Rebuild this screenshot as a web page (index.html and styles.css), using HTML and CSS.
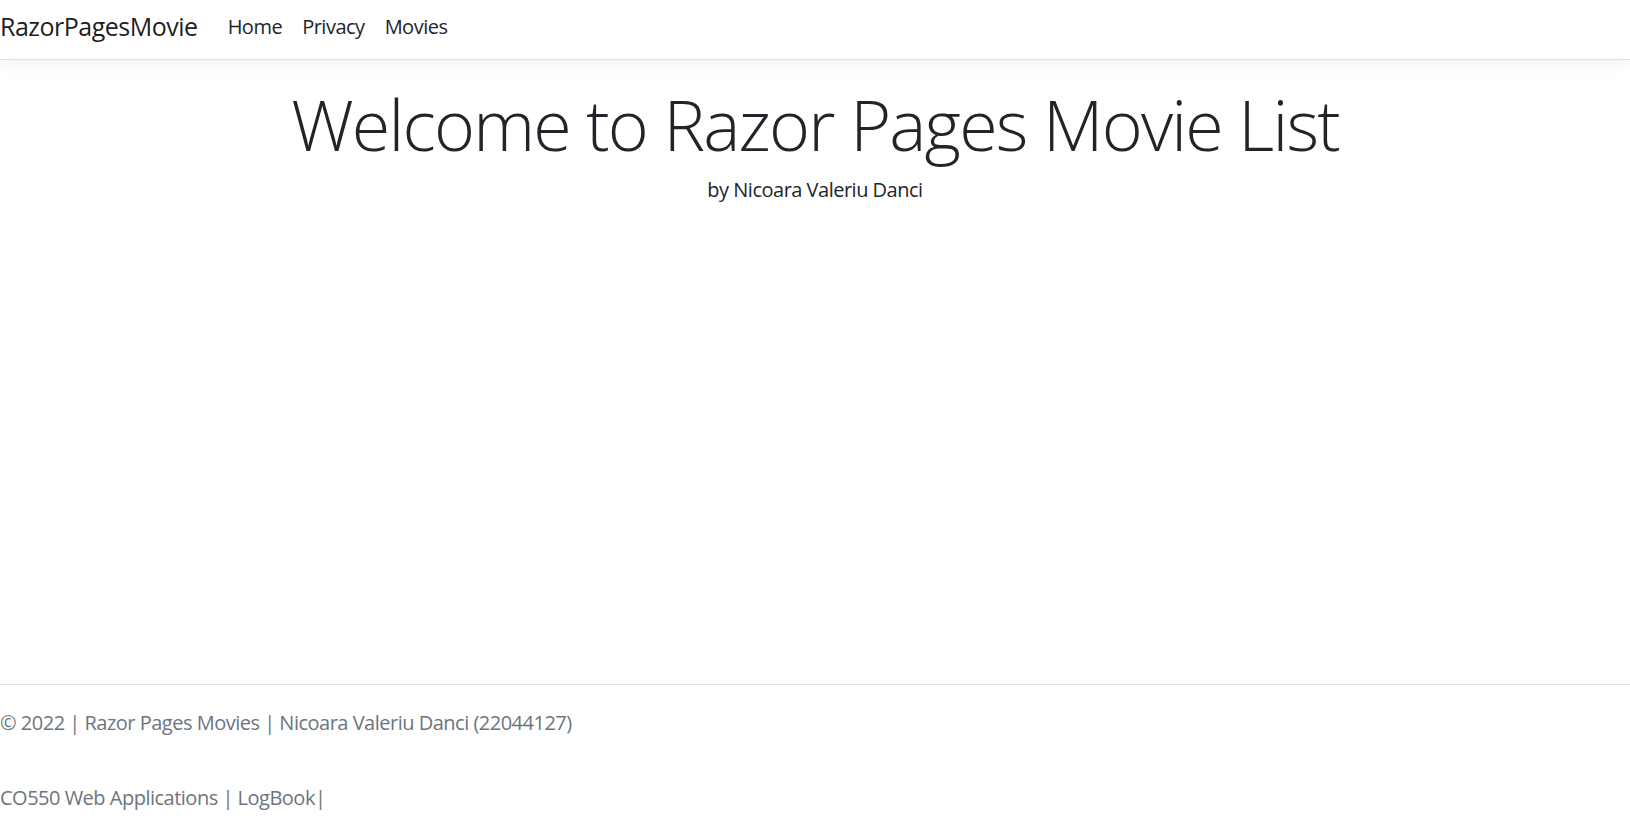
FILE: index.html
```html
<!DOCTYPE html>
<html lang="en">
<head>
<meta charset="utf-8">
<title>Home page - RazorPagesMovie</title>
<link rel="stylesheet" href="styles.css">
</head>
<body>
<header class="navbar">
  <a class="brand" href="#">RazorPagesMovie</a>
  <nav class="nav">
    <a class="nav-link" href="#">Home</a>
    <a class="nav-link" href="#">Privacy</a>
    <a class="nav-link" href="#">Movies</a>
  </nav>
</header>
<main class="main">
  <div class="hero">
    <h1 class="display">Welcome to Razor Pages Movie List</h1>
    <p class="byline">by Nicoara Valeriu Danci</p>
  </div>
</main>
<footer class="footer">
  <div class="footer-line">© 2022 | Razor Pages Movies | Nicoara Valeriu Danci (22044127)</div>
  <div class="footer-line">CO550 Web Applications | LogBook|</div>
</footer>
</body>
</html>
```
FILE: styles.css
```css
* { box-sizing: border-box; }
html, body { margin: 0; padding: 0; }
body {
  font-family: "Open Sans", "Noto Sans", sans-serif;
  font-size: 20px;
  line-height: 1.5;
  letter-spacing: -0.5px;
  color: #212529;
  background: #fff;
  min-height: 835px;
  display: flex;
  flex-direction: column;
}
.navbar {
  display: flex;
  align-items: center;
  height: 60px;
  padding-top: 0;
  padding-bottom: 5px;
  border-bottom: 1px solid #dee2e6;
  box-shadow: 0 5px 15px rgba(0,0,0,.05);
  background: #fff;
  position: relative;
  z-index: 1;
}
.brand {
  font-size: 25px;
  color: rgba(0,0,0,.9);
  text-decoration: none;
  margin-right: 20px;
}
.nav { display: flex; }
.nav-link {
  color: #212529;
  text-decoration: none;
  padding: 0 10px;
}
.main { flex: 1; padding-top: 22px; }
.hero { text-align: center; }
.display {
  font-size: 70px;
  font-weight: 300;
  line-height: 1.2;
  letter-spacing: -1.8px;
  margin: 0 0 9px;
}
.byline { margin: 0; }
.footer {
  border-top: 1px solid #dee2e6;
  color: #6c757d;
  line-height: 75px;
}
```
